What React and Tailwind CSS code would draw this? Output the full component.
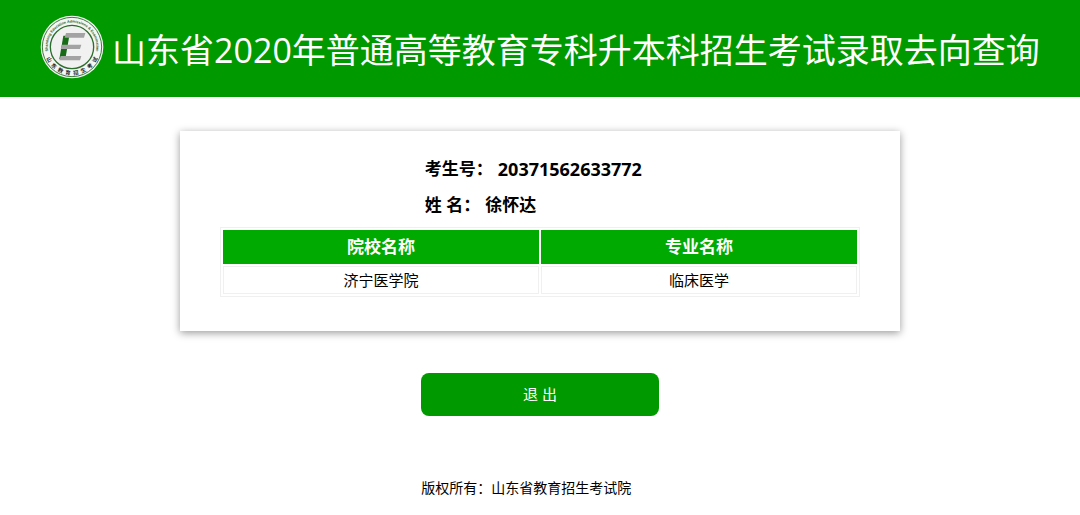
// Admission result page: banner, candidate card, exit button, footer.

const TITLE = '山东省2020年普通高等教育专科升本科招生考试录取去向查询'

const CANDIDATE = {
  id: '20371562633772',
  name: '徐怀达',
}

const RESULTS = [
  { school: '济宁医学院', major: '临床医学' },
]

// characters along the lower half of the seal, left to right
const SEAL_CHARS = ['山', '东', '教', '育', '招', '生', '考', '试']

function Logo() {
  return (
    <svg viewBox="0 0 192 192" className="size-16 shrink-0" role="img" aria-label="山东省教育招生考试院">
      <defs>
        <path id="ring-top" d="M 30 127 A 73 73 0 1 1 162 127" />
      </defs>
      <circle cx="96" cy="96" r="94" fill="#f3f6f3" />
      <circle cx="96" cy="96" r="89" fill="none" stroke="#3c7a3c" strokeWidth="3" />
      <circle cx="96" cy="96" r="65" fill="#f1f1f1" stroke="#2c6e2c" strokeWidth="4" />
      <text className="font-['Liberation_Sans'] font-bold" fontSize="11" fill="#1f5a1f">
        <textPath href="#ring-top" startOffset="50%" textAnchor="middle">
          Shandong Education Admissions &amp; Examination
        </textPath>
      </text>
      {SEAL_CHARS.map((c, i) => (
        <text
          key={c}
          x="96"
          y="180"
          textAnchor="middle"
          transform={`rotate(${61 - i * 17.4} 96 96)`}
          className="font-['Noto_Sans_CJK_SC'] font-bold"
          fontSize="16"
          fill="#222"
        >
          {c}
        </text>
      ))}
      <path d="M70 62 H88 L76 132 H58 Z" fill="#176b17" />
      <path d="M78 54 H136 L132 68 H74 Z M66 89 H124 L120 102 H62 Z M62 123 H124 L120 136 H58 Z" fill="#a3a3a3" />
    </svg>
  )
}

function ResultTable() {
  return (
    <table className="w-full table-fixed border-separate border-spacing-[2px] border border-[#f0f0f0] text-center">
      <thead>
        <tr className="text-[17px] leading-8 text-white">
          <th className="border border-[#0a0] bg-[#0a0] font-bold">院校名称</th>
          <th className="border border-[#0a0] bg-[#0a0] font-bold">专业名称</th>
        </tr>
      </thead>
      <tbody>
        {RESULTS.map((r) => (
          <tr key={r.school} className="text-[15px] leading-[26px]">
            <td className="border border-[#f0f0f0]">{r.school}</td>
            <td className="border border-[#f0f0f0]">{r.major}</td>
          </tr>
        ))}
      </tbody>
    </table>
  )
}

export default function App() {
  return (
    <div className="bg-white font-['Open_Sans','Noto_Sans_CJK_SC',sans-serif] text-black">
      <header className="flex items-start justify-center gap-2 bg-[#090] px-8 pt-[15px] pb-3">
        <Logo />
        <h1 className="text-[34px] leading-[70px] whitespace-nowrap text-white">{TITLE}</h1>
      </header>

      <main>
        <section className="mx-auto mt-[34px] w-2/3 bg-white px-10 pt-5 pb-[34px] shadow-[0_2px_8px_rgba(0,0,0,0.4)]">
          <dl className="mx-auto mb-1 w-[36%] text-[17px] leading-9 font-bold whitespace-nowrap">
            <div className="flex gap-[5px]">
              <dt>考生号：</dt>
              <dd className="text-lg leading-9">{CANDIDATE.id}</dd>
            </div>
            <div className="flex gap-[5px]">
              <dt>姓 名：</dt>
              <dd>{CANDIDATE.name}</dd>
            </div>
          </dl>
          <ResultTable />
        </section>

        <button
          type="button"
          className="mx-auto mt-[42px] block w-[22%] rounded-lg bg-[#090] text-[15px] leading-[43px] text-white"
        >
          退 出
        </button>
      </main>

      <footer className="mx-auto mt-[60px] w-[22%] pb-4 text-sm leading-6 whitespace-nowrap">
        版权所有：山东省教育招生考试院
      </footer>
    </div>
  )
}
